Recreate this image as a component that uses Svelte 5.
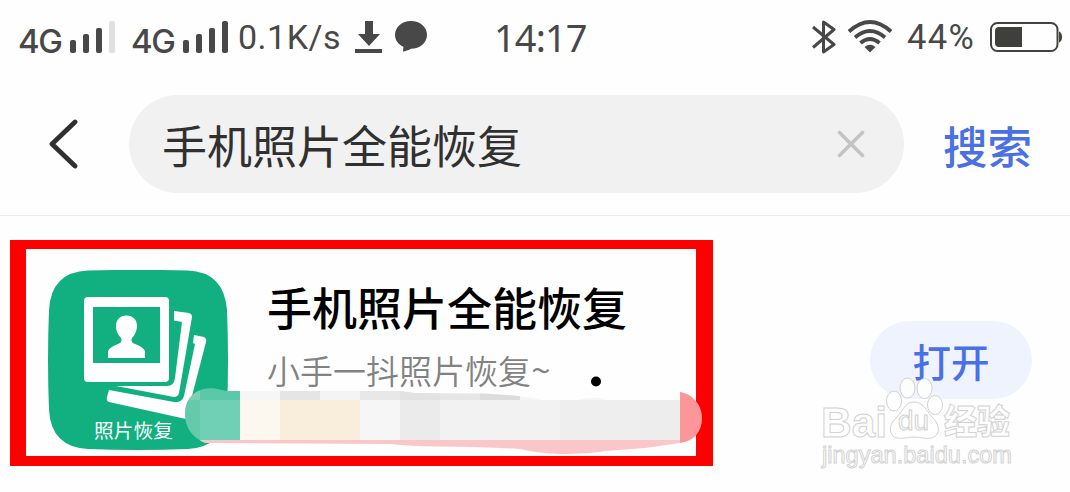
<script lang="ts">
  const appName = '手机照片全能恢复';

  const signals = [
    { bars: 3 },
    { bars: 4 }
  ];

  const barHeights = [13, 19, 25, 32];

  // blurred strip over the download details
  const mosaic = [
    { x: 185, y: 380, w: 15, h: 20, fill: '#7dd0b3' },
    { x: 185, y: 400, w: 15, h: 40, fill: '#66c9ac' },
    { x: 200, y: 380, w: 40, h: 20, fill: '#5bc8a8' },
    { x: 200, y: 400, w: 40, h: 40, fill: '#70d0b5' },
    { x: 240, y: 380, w: 40, h: 20, fill: '#f6f6f6' },
    { x: 240, y: 400, w: 40, h: 40, fill: '#fcf8ef' },
    { x: 280, y: 380, w: 40, h: 20, fill: '#e5e5e5' },
    { x: 280, y: 400, w: 80, h: 40, fill: '#f9eedc' },
    { x: 320, y: 380, w: 40, h: 20, fill: '#f4f4f4' },
    { x: 360, y: 380, w: 40, h: 20, fill: '#e8e8e8' },
    { x: 360, y: 400, w: 40, h: 40, fill: '#f6f6f6' },
    { x: 400, y: 380, w: 40, h: 20, fill: '#e2e2e2' },
    { x: 400, y: 400, w: 40, h: 40, fill: '#ebebeb' },
    { x: 440, y: 380, w: 40, h: 20, fill: '#e6e6e6' },
    { x: 480, y: 380, w: 40, h: 20, fill: '#dcdcdc' },
    { x: 520, y: 380, w: 160, h: 20, fill: '#f5f5f5' },
    { x: 440, y: 400, w: 120, h: 40, fill: '#f2f2f2' },
    { x: 560, y: 400, w: 80, h: 40, fill: '#eeeeee' },
    { x: 640, y: 400, w: 40, h: 40, fill: '#ededed' },
    { x: 185, y: 440, w: 495, h: 20, fill: '#fac6c8' },
    { x: 680, y: 380, w: 25, h: 80, fill: '#fd9698' }
  ];
</script>

<main class="screen">
  <header class="status">
    {#each signals as signal}
      <div class="signal">
        <span class="network">4G</span>
        <div class="bars">
          {#each barHeights as height, i}
            <i class:off={i >= signal.bars} style="height: {height}px"></i>
          {/each}
        </div>
      </div>
    {/each}
    <span class="speed">0.1K/s</span>
    <svg class="download" width="28" height="34" viewBox="0 0 28 34">
      <path d="M10 1h8v13h7L14 26 3 14h7zM0 29h27v4H0z" fill="#484848" />
    </svg>
    <svg class="chat" width="32" height="32" viewBox="0 0 32 32">
      <path
        d="M16 0c9 0 16 6 16 13.700c0 8-7 14-16 14c-1 1-5 2-8 3l.4-5C3 23 0 19 0 14C0 6 7 0 16 0z"
        fill="#484848"
      />
    </svg>
    <span class="clock">14:17</span>
    <div class="right">
      <svg width="24" height="36" viewBox="0 0 24 36">
        <path
          d="M1 8l21 17.500L11.500 33V3L22 10.500 1 28.500"
          fill="none"
          stroke="#484848"
          stroke-width="3"
          stroke-linejoin="round"
        />
      </svg>
      <svg class="wifi" width="44" height="33" viewBox="0 0 44 33">
        <g fill="none" stroke="#484848" stroke-width="3.800">
          <path d="M1 11.500Q22-7.500 43 11.500" />
          <path d="M7 17.500Q22 4.500 37 17.500" />
          <path d="M12.500 23Q22 15 31.500 23" />
        </g>
        <path d="M16.500 27q5.500-4.500 11 0L22 32.500z" fill="#484848" />
      </svg>
      <span class="percent">44%</span>
      <svg class="battery" width="72" height="32" viewBox="0 0 72 32">
        <rect x="1" y="2" width="66.500" height="28" rx="6.500" fill="none" stroke="#42433f" stroke-width="2" />
        <path d="M9 6h23v20H9q-4 0-4-4V10q0-4 4-4z" fill="#3f403b" />
        <path d="M69 10.500q3 1 3 5.500t-3 5.500z" fill="#42433f" />
      </svg>
    </div>
  </header>

  <div class="search">
    <svg class="back" width="30" height="50" viewBox="0 0 30 50">
      <path
        d="M26 3L3 25L26 47"
        fill="none"
        stroke="#303030"
        stroke-width="4.800"
        stroke-linecap="round"
        stroke-linejoin="round"
      />
    </svg>
    <div class="field">
      <span>{appName}</span>
      <svg width="28" height="28" viewBox="0 0 28 28">
        <path d="M2.500 2.500l23 23M25.500 2.500l-23 23" stroke="#c3c3c3" stroke-width="3.600" stroke-linecap="round" />
      </svg>
    </div>
    <span class="go">搜索</span>
  </div>

  <section class="result">
    <div class="frame">
      <svg class="app-icon" width="180" height="180" viewBox="0 0 180 180">
        <path
          d="M40 .5Q90-.8 140 .5Q176 2 179 40Q181 90 179 140Q176 177 140 179Q90 181 40 179Q3 177 1 140Q-1 90 1 40Q3 2 40 .5z"
          fill="#12b080"
        />
        <rect x="36" y="27" width="85" height="85" rx="4" fill="#fff" />
        <path d="M45 37h67v56H45z" fill="#12b080" />
        <path
          d="M60 88V81Q62 77 70 74Q75 72 73 68C69 64 68 60 68 56C68 50 72 45.500 78.500 45.500S89 50 89 56C89 60 87 65 84 68Q82 72 87 74Q95 77 97 81V88z"
          fill="#fff"
        />
        <path d="M126 41L141 43Q144 44 144 47L131 123Q130 127 126 127L68 116H119Q126 116 127 108L134 52L126 50.500z" fill="#fff" />
        <path d="M146 65L156 67Q159 69 158 72L138 149L61 132Q58 131 59 127L61 120L126 132Q134 133 136 126L147 74L145 73z" fill="#fff" />
        <text class="caption" x="46" y="168" textLength="79">照片恢复</text>
      </svg>
      <div class="info">
        <h1>{appName}</h1>
        <p>小手一抖照片恢复<span class="tilde">~</span></p>
      </div>
    </div>
    <button>打开</button>
  </section>

  <svg class="overlay" width="1070" height="492" viewBox="0 0 1070 492">
    <defs>
      <clipPath id="brush">
        <path
          d="M185 414C185 395 199 387 215 388.500L226 391H400L415 393L480 393.500Q525 395 541 400H577Q590 397 600 398L605 400H680V392C693 394 702 405 702 418C702 432 694 441 680 443L645 448L605 451Q590 454 560 454Q535 453 520 449Q490 447 440 446.500Q410 446 390 444L205 443Q185 434 185 414z"
        />
      </clipPath>
    </defs>
    <circle cx="596" cy="381.500" r="5" fill="#000" />
    <g clip-path="url(#brush)" shape-rendering="crispEdges">
      {#each mosaic as tile}
        <rect x={tile.x} y={tile.y} width={tile.w} height={tile.h} fill={tile.fill} />
      {/each}
    </g>
    <g class="mark">
      <text class="brand" x="821" y="437" textLength="66" lengthAdjust="spacingAndGlyphs">Bai</text>
      <ellipse cx="894" cy="401" rx="7.500" ry="10" />
      <ellipse cx="907.500" cy="388" rx="7.500" ry="10" />
      <ellipse cx="924.500" cy="388.500" rx="7.500" ry="10" />
      <ellipse cx="935" cy="405" rx="7.500" ry="9.500" />
      <path d="M914 402C923 402 926 410 932 417C939 423 941 433 934 437C927 440 921 437 914 437S901 440 894 437C888 432 890 423 896 418C903 411 905 402 914 402z" />
      <text class="du" x="898" y="430" textLength="31" lengthAdjust="spacingAndGlyphs">du</text>
      <text class="cn" x="944" y="434" textLength="66" lengthAdjust="spacingAndGlyphs">经验</text>
      <text class="url" x="822" y="463" textLength="190" lengthAdjust="spacingAndGlyphs">jingyan.baidu.com</text>
    </g>
  </svg>
</main>

<style>
  :global(body) {
    margin: 0;
    background: #fff;
  }

  .screen {
    position: relative;
    width: 1070px;
    height: 492px;
    overflow: hidden;
    background: #fefefe;
    font-family: 'Noto Sans CJK SC', sans-serif;
  }

  .status {
    display: flex;
    align-items: center;
    box-sizing: border-box;
    height: 73px;
    padding: 0 8px 0 18px;
    color: #484848;
    font-family: Roboto, sans-serif;
    white-space: nowrap;
  }

  .status svg {
    flex: none;
  }

  .signal {
    display: flex;
    flex: none;
    align-items: flex-end;
    height: 32px;
    width: 113px;
  }

  .network {
    width: 52px;
    font-family: Inter, sans-serif;
    font-size: 33px;
    font-weight: 500;
    letter-spacing: -1.5px;
    line-height: 24px;
  }

  .bars {
    display: flex;
    align-items: flex-end;
    gap: 7px;
  }

  .bars i {
    width: 6px;
    border-radius: 2px;
    background: #484848;
  }

  .bars .off {
    background: #dfdfdf;
  }

  .speed {
    flex: none;
    width: 117px;
    margin-left: -6px;
    font-size: 34px;
    letter-spacing: 0.5px;
  }

  .chat {
    margin: 0 67px 0 12px;
  }

  .clock {
    font-family: 'Noto Sans', sans-serif;
    font-size: 38px;
    letter-spacing: -0.9px;
  }

  .right {
    display: flex;
    align-items: center;
    margin-left: auto;
  }

  .wifi {
    margin: 0 15px 0 12px;
  }

  .percent {
    width: 83px;
    font-size: 34.5px;
    letter-spacing: 1.4px;
  }

  .search {
    display: flex;
    align-items: center;
    box-sizing: border-box;
    height: 143px;
    padding: 0 0 0 49px;
    border-bottom: 1px solid #ececec;
  }

  .field {
    display: flex;
    flex: none;
    align-items: center;
    justify-content: space-between;
    box-sizing: border-box;
    width: 775px;
    height: 98px;
    margin: 0 39px 0 50px;
    padding: 0 39px 0 33px;
    border-radius: 49px;
    background: #f1f1f1;
    color: #303030;
    font-size: 45px;
  }

  .go {
    color: #4a70e4;
    font-size: 44.5px;
    font-weight: 500;
    white-space: nowrap;
  }

  .result {
    display: flex;
    padding: 24px 0 0 10px;
  }

  .frame {
    display: flex;
    flex: none;
    box-sizing: border-box;
    width: 703px;
    height: 226px;
    padding: 21px 0 0 22px;
    border: solid #fe0000;
    border-width: 9px 17px 10px 16px;
  }

  .app-icon {
    flex: none;
  }

  .caption {
    fill: #fff;
    font-size: 19.7px;
  }

  .info {
    margin-left: 39px;
    white-space: nowrap;
  }

  h1 {
    margin: 7px 0 0;
    color: #000;
    font-size: 45px;
    font-weight: 500;
    line-height: 60px;
  }

  p {
    margin: 9px 0 0;
    color: #828282;
    font-size: 33px;
    font-weight: 350;
    line-height: 48px;
  }

  .tilde {
    font-size: 36px;
    line-height: 1;
  }

  button {
    width: 162px;
    height: 78px;
    margin: 81px 0 0 157px;
    padding: 0;
    border: 0;
    border-radius: 39px;
    background: #eff3fe;
    color: #4a70e8;
    font: 500 38.500px 'Noto Sans CJK SC', sans-serif;
  }

  .overlay {
    position: absolute;
    inset: 0;
    pointer-events: none;
  }

  .mark {
    fill: #fff;
    fill-opacity: 0.8;
    stroke: #d2d2d2;
    stroke-width: 1px;
  }

  .brand {
    font: bold 43px 'Liberation Sans', sans-serif;
  }

  .du {
    font: 27px 'Liberation Sans', sans-serif;
  }

  .cn {
    font: 900 34px 'Noto Sans CJK SC', sans-serif;
  }

  .url {
    font: 24px 'Liberation Sans', sans-serif;
  }
</style>
